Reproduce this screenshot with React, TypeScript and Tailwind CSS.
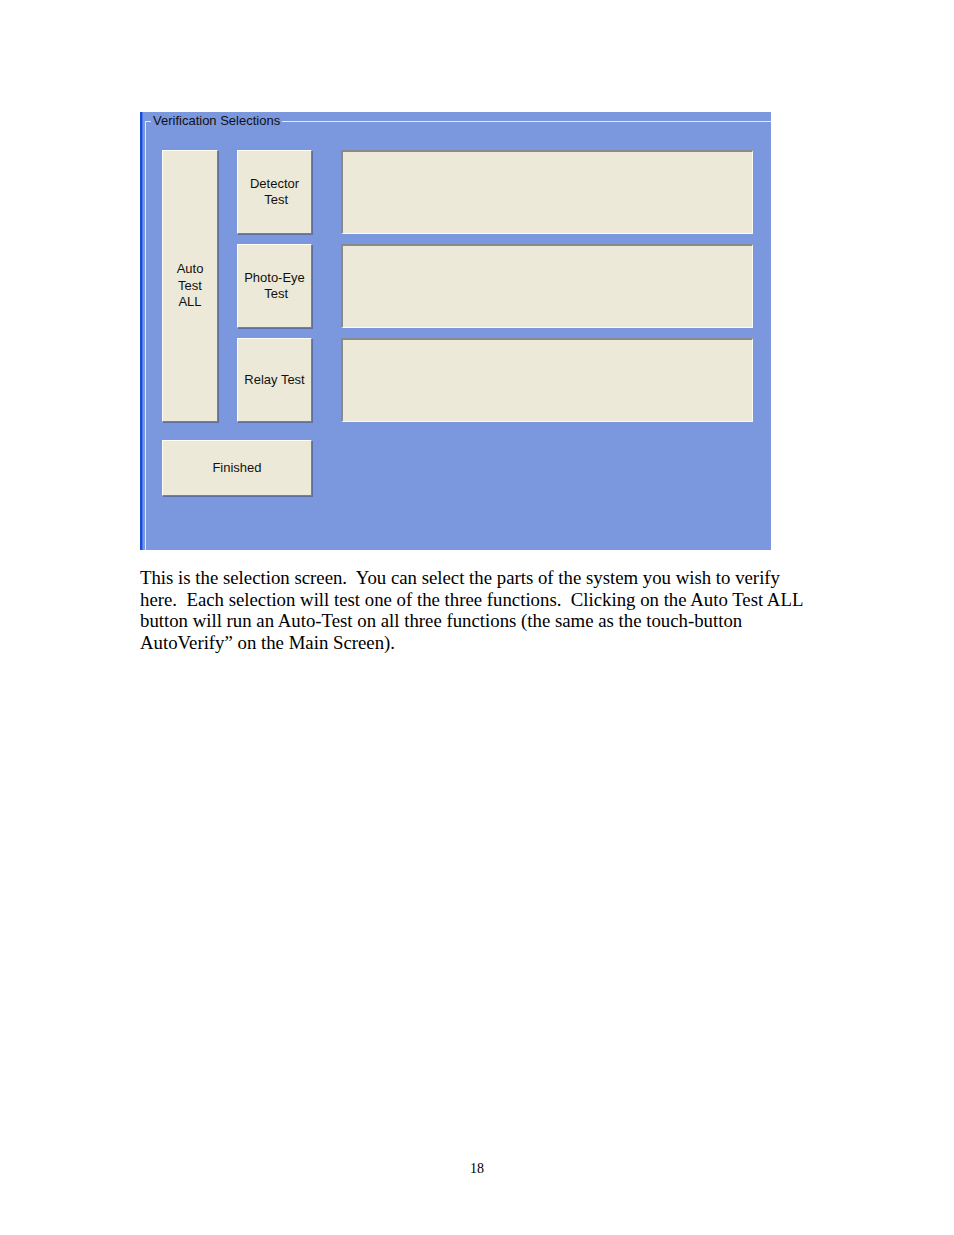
const btn =
  "flex items-center justify-center bg-[#ece9d8] border border-t-[#fdfcf7] border-l-[#fdfcf7] border-r-[#7f7f7c] border-b-[#7f7f7c] shadow-[1px_1px_0_#5f6f9e] text-center text-[13px] leading-[16.5px] text-[#111]";

const field =
  "bg-[#ece9d8] border-t-2 border-l-2 border-r border-b border-t-[#8a8a86] border-l-[#8a8a86] border-r-[#fbfaf4] border-b-[#fbfaf4]";

function VerifyPanel() {
  return (
    <div className="flex h-[438px] w-[631px] bg-[#7b97de] font-['Liberation_Sans',Arial,sans-serif]">
      <div className="w-[2px] bg-[#1c4bd4]" />
      <div className="w-[1px] bg-[#4a76e6]" />
      <div className="flex-1 pl-[2px] pt-[9px]">
        <div className="h-full border-l border-t border-[#e4e9f6]">
          <div className="-mt-[8px] ml-[5px] w-fit bg-[#7b97de] px-[2px] text-[13px] leading-[14px] text-[#111]">
            Verification Selections
          </div>
          <div className="ml-[16px] mt-[22px] grid grid-cols-[56px_19px_75px_29px_412px] grid-rows-[84px_84px_84px_64px] gap-y-[10px]">
            <button type="button" className={`${btn} col-start-1 row-span-3 row-start-1`}>
              Auto
              <br />
              Test
              <br />
              ALL
            </button>
            <button type="button" className={`${btn} col-start-3 row-start-1`}>
              Detector
              <br />
              &nbsp;Test
            </button>
            <button type="button" className={`${btn} col-start-3 row-start-2`}>
              Photo-Eye
              <br />
              &nbsp;Test
            </button>
            <button type="button" className={`${btn} col-start-3 row-start-3`}>
              Relay Test
            </button>
            <div className={`${field} col-start-5 row-start-1`} />
            <div className={`${field} col-start-5 row-start-2`} />
            <div className={`${field} col-start-5 row-start-3`} />
            <button type="button" className={`${btn} col-span-3 col-start-1 row-start-4 mt-[8px]`}>
              Finished
            </button>
          </div>
        </div>
      </div>
    </div>
  );
}

export default function App() {
  return (
    <div className="h-[1235px] w-[954px] bg-white font-['Liberation_Serif','Times_New_Roman',serif] text-black">
      <div className="pl-[140px] pt-[112px]">
        <VerifyPanel />
        <p className="mt-[17px] whitespace-pre text-[18.8px] leading-[21.6px]">
          {"This is the selection screen.  You can select the parts of the system you wish to verify\n"}
          {"here.  Each selection will test one of the three functions.  Clicking on the Auto Test ALL\n"}
          {"button will run an Auto-Test on all three functions (the same as the touch-button\n"}
          {"AutoVerify\u201d on the Main Screen)."}
        </p>
      </div>
      <p className="mt-[508px] text-center text-[14px] leading-[16px]">18</p>
    </div>
  );
}
